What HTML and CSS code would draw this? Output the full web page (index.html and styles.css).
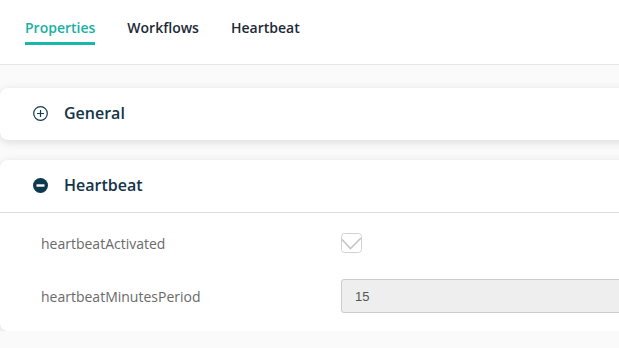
FILE: index.html
```html
<!DOCTYPE html>
<html lang="en">

<head>
    <meta charset="UTF-8">
    <title>Properties</title>
    <link rel="stylesheet" href="styles.css">
</head>

<body>
    <div class="tabs">
        <a class="tab active">Properties</a>
        <a class="tab">Workflows</a>
        <a class="tab">Heartbeat</a>
    </div>

    <div class="panels">
        <div class="panel">
            <div class="panel-head">
                <svg class="toggle" width="15" height="15" viewBox="0 0 15 15">
                    <circle cx="7.5" cy="7.5" r="6.8" fill="none" stroke="#123c4f" stroke-width="1.2" />
                    <path d="M7.5 4v7M4 7.5h7" stroke="#123c4f" stroke-width="1.2" />
                </svg>
                <span>General</span>
            </div>
        </div>

        <div class="panel">
            <div class="panel-head open">
                <svg class="toggle" width="15" height="15" viewBox="0 0 15 15">
                    <circle cx="7.5" cy="7.5" r="7.5" fill="#0d3a4e" />
                    <rect x="3.5" y="6.3" width="8" height="2.4" fill="#fff" />
                </svg>
                <span>Heartbeat</span>
            </div>
            <div class="panel-body">
                <div class="field">
                    <label>heartbeatActivated</label>
                    <span class="check">
                        <svg width="21" height="20" viewBox="0 0 21 20">
                            <rect x="0.5" y="0.5" width="20" height="19" rx="3" fill="#fff" stroke="#d2d2d2" />
                            <path d="M1 6.5l8.5 9l10.5-10.5" fill="none" stroke="#c6c6c6" stroke-width="1.6" />
                        </svg>
                    </span>
                </div>
                <div class="field">
                    <label>heartbeatMinutesPeriod</label>
                    <input class="text" type="text" value="15" disabled>
                </div>
            </div>
        </div>
    </div>
</body>

</html>
```

FILE: styles.css
```css
html,
body {
    margin: 0;
    padding: 0;
    background-color: #fafafa;
    font-family: "Open Sans", "Liberation Sans", sans-serif;
    overflow: hidden;
}

.tabs {
    display: flex;
    gap: 32px;
    height: 64px;
    padding-left: 25px;
    background-color: #fff;
    border-bottom: 1px solid #e6e6e6;
}

.tab {
    font-size: 14px;
    font-weight: 600;
    color: #1c2a37;
    padding-top: 18px;
    line-height: 20px;
    height: 44px;
    box-sizing: border-box;
}

.tab.active {
    color: #19b0a2;
    border-bottom: 3px solid #19b8aa;
    height: 45px;
}

.panels {
    padding-top: 23px;
    display: flex;
    flex-direction: column;
    gap: 20px;
    margin-right: -20px;
}

.panel {
    background-color: #fff;
    border-radius: 8px;
    box-shadow: 0 2px 8px rgba(0, 0, 0, 0.13);
}

.panel-head {
    display: flex;
    align-items: center;
    gap: 16px;
    height: 52px;
    box-sizing: border-box;
    padding: 0 0 2px 33px;
    font-size: 16px;
    font-weight: 600;
    color: #133447;
}

.panel-head.open {
    height: 53px;
    border-bottom: 1px solid #dcdcdc;
}

.toggle {
    display: block;
}

.panel-body {
    padding: 13px 0 18px 41px;
    display: flex;
    flex-direction: column;
    gap: 19px;
}

.field {
    display: grid;
    grid-template-columns: 300px 1fr;
    align-items: center;
    height: 34px;
}

.field label {
    font-size: 14px;
    color: #6a6a6a;
}

.check svg {
    display: block;
}

.text {
    height: 34px;
    box-sizing: border-box;
    border: 1px solid #ccc;
    border-radius: 3px;
    background-color: #eee;
    padding: 0 13px;
    font-family: "Liberation Sans", Arial, sans-serif;
    font-size: 13px;
    color: #555;
}
```
